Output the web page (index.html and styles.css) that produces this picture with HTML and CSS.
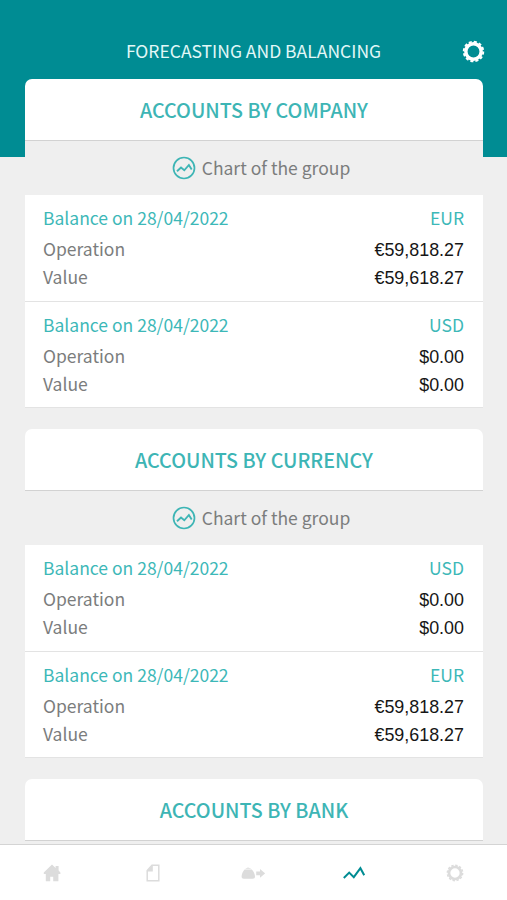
FILE: index.html
```html
<!DOCTYPE html>
<html lang="en">
<head>
  <meta charset="UTF-8" />
  <meta name="viewport" content="width=device-width, initial-scale=1.0" />
  <title>Forecasting and Balancing</title>
  <link rel="stylesheet" href="styles.css">
</head>
<body>
  <svg class="sprite" width="0" height="0">
    <symbol id="icon-chart" viewBox="0 0 24 24">
      <circle cx="12" cy="12" r="10.5" fill="none" stroke="currentColor" stroke-width="1.7" />
      <path d="M5 15.2l4-3.6 3.3 2.700 4.600-5.300 2.800 4.400" fill="none" stroke="currentColor" stroke-width="1.9" />
    </symbol>
    <symbol id="icon-gear" viewBox="0 0 24 24">
      <circle cx="12" cy="12" r="8" fill="none" stroke="currentColor" stroke-width="3.6" />
      <circle cx="12" cy="12" r="10.2" fill="none" stroke="currentColor" stroke-width="2" stroke-dasharray="3.2 2.141" />
    </symbol>
  </svg>

  <div class="screen">
    <header class="topbar">
      <h1 class="topbar-title">FORECASTING AND BALANCING</h1>
      <svg class="topbar-gear"><use href="#icon-gear" /></svg>
    </header>

    <main class="content">
      <section class="card">
        <h2 class="card-title">ACCOUNTS BY COMPANY</h2>
        <div class="group-chart"><svg><use href="#icon-chart" /></svg><span>Chart of the group</span></div>
        <div class="balance">
          <div class="row head"><span>Balance on 28/04/2022</span><span>EUR</span></div>
          <div class="row"><span>Operation</span><span class="amount">€59,818.27</span></div>
          <div class="row"><span>Value</span><span class="amount">€59,618.27</span></div>
        </div>
        <div class="balance">
          <div class="row head"><span>Balance on 28/04/2022</span><span>USD</span></div>
          <div class="row"><span>Operation</span><span class="amount">$0.00</span></div>
          <div class="row"><span>Value</span><span class="amount">$0.00</span></div>
        </div>
      </section>

      <section class="card">
        <h2 class="card-title">ACCOUNTS BY CURRENCY</h2>
        <div class="group-chart"><svg><use href="#icon-chart" /></svg><span>Chart of the group</span></div>
        <div class="balance">
          <div class="row head"><span>Balance on 28/04/2022</span><span>USD</span></div>
          <div class="row"><span>Operation</span><span class="amount">$0.00</span></div>
          <div class="row"><span>Value</span><span class="amount">$0.00</span></div>
        </div>
        <div class="balance">
          <div class="row head"><span>Balance on 28/04/2022</span><span>EUR</span></div>
          <div class="row"><span>Operation</span><span class="amount">€59,818.27</span></div>
          <div class="row"><span>Value</span><span class="amount">€59,618.27</span></div>
        </div>
      </section>

      <section class="card">
        <h2 class="card-title">ACCOUNTS BY BANK</h2>
        <div class="group-chart"></div>
      </section>
    </main>

    <nav class="tabbar">
      <a class="tab">
        <svg width="18" height="18" viewBox="0 0 18 18"><path d="M9 .6L.8 8.600v1.400h2V17.200h4.400v-4.400h3v4.400H15.400V10h2V8.600L15.600 6.600V2h-3v2z" fill="currentColor" /></svg>
      </a>
      <a class="tab">
        <svg width="14" height="18" viewBox="0 0 14 18"><path d="M6 1.200h6.800v15.600H1.200V6.500z" fill="none" stroke="currentColor" stroke-width="1.5" /><path d="M6.800.8v6.800H.6z" fill="currentColor" /></svg>
      </a>
      <a class="tab">
        <svg width="24" height="14" viewBox="0 0 24 14"><path d="M3.600 3.400h7.200c1.700 1.600 3.200 4.800 3.200 7.200 0 1.600-.8 2.200-2.200 2.200H2.800C1.400 12.800.6 12.200.6 10.600.6 8.200 1.900 5 3.600 3.400zM4.500 2.400l2.500-1 3 1v.4H4.500zM15.200 5.600h3.800V3l5.200 4.400-5.200 4.400V9.200h-3.800z" fill="currentColor" /></svg>
      </a>
      <a class="tab active">
        <svg width="22" height="14" viewBox="0 0 22 14"><path d="M.8 12l5.400-5.400 4.600 4.600 6.600-9 3.800 7" fill="none" stroke="currentColor" stroke-width="2" /></svg>
      </a>
      <a class="tab">
        <svg width="18" height="18"><use href="#icon-gear" /></svg>
      </a>
    </nav>
  </div>
</body>
</html>
```
FILE: styles.css
```css
* {
  box-sizing: border-box;
}
body {
  margin: 0;
  background-color: #efefef;
  color: #7b7d7d;
  font-family: "Noto Sans CJK SC", "Noto Sans", sans-serif;
  font-size: 17.5px;
}
.sprite {
  display: block;
}
.screen {
  display: flex;
  flex-direction: column;
  height: 900px;
  overflow: hidden;
}
.topbar {
  display: flex;
  flex: none;
  align-items: flex-start;
  height: 157px;
  padding: 40px 22px 0 45px;
  background-color: #008c93;
  color: #e2f8f8;
}
.topbar-title {
  flex: 1;
  margin: 0;
  font-size: 17.5px;
  font-weight: 400;
  line-height: 22px;
  text-align: center;
}
.topbar-gear {
  width: 23px;
  height: 23px;
  color: #fff;
}
.content {
  flex: 1;
  min-height: 0;
  margin-top: -78px;
  padding: 0 24px 0 25px;
  overflow: hidden;
}
.card {
  margin-bottom: 21px;
}
.card-title {
  height: 62px;
  margin: 0;
  border-bottom: 1px solid #d2d2d2;
  border-radius: 7px 7px 0 0;
  background-color: #fff;
  color: #3db5b5;
  font-size: 19.7px;
  font-weight: 500;
  line-height: 62px;
  text-align: center;
}
.group-chart {
  display: flex;
  align-items: center;
  justify-content: center;
  gap: 6px;
  height: 54px;
  padding-left: 14px;
  background-color: #efefef;
}
.group-chart svg {
  width: 24px;
  height: 24px;
  color: #3db5b5;
}
.group-chart span {
  padding-bottom: 2px;
}
.balance {
  height: 106.5px;
  padding: 9px 19px 0 18px;
  border-bottom: 1px solid #e3e3e3;
  background-color: #fff;
}
.row {
  display: flex;
  justify-content: space-between;
  height: 28px;
  line-height: 28px;
}
.row.head {
  height: 31px;
  color: #3db8b8;
}
.amount {
  padding-top: 1px;
  color: #161616;
  font-family: "Liberation Sans", Arial, sans-serif;
  font-size: 17.9px;
}
.tabbar {
  display: flex;
  flex: none;
  height: 56px;
  padding: 0 2px;
  border-top: 1px solid #d4d4d4;
  background-color: #fff;
  color: #dcdcdc;
}
.tab {
  display: flex;
  flex: 1;
  align-items: center;
  justify-content: center;
}
.tab.active {
  color: #008c93;
}
```
